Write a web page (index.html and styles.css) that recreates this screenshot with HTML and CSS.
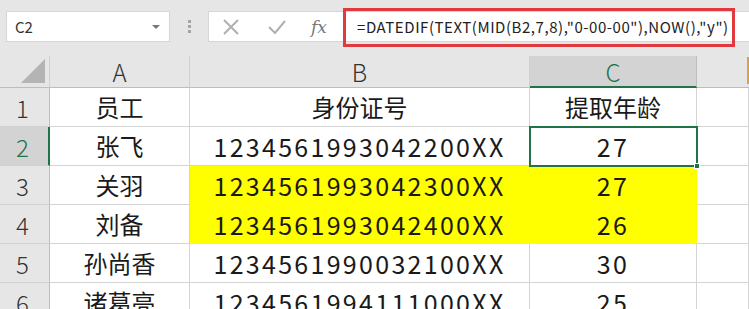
FILE: index.html
```html
<!DOCTYPE html>
<html>
<head lang="zh">
    <meta charset="UTF-8">
    <title>提取年龄</title>
    <link rel="stylesheet" href="styles.css">
</head>
<body>
<div class="toolbar">
    <div class="namebox">
        <span class="name">C2</span>
        <span class="arrow"></span>
    </div>
    <div class="dots"><i></i><i></i><i></i></div>
    <div class="fbar">
        <div class="fbtns">
            <svg class="ico" width="18" height="18" viewBox="0 0 18 18"><path d="M2 2 L16 16 M16 2 L2 16" stroke="#b0b0b0" stroke-width="2" fill="none"/></svg>
            <svg class="ico" width="18" height="18" viewBox="0 0 18 18"><path d="M1 9 L7 15 L17 3" stroke="#b0b0b0" stroke-width="2" fill="none"/></svg>
            <span class="fx">fx</span>
        </div>
        <div class="formula">=DATEDIF(TEXT(MID(B2,7,8),"0-00-00"),NOW(),"y")</div>
        <div class="mark"></div>
    </div>
</div>
<div class="sheet">
    <div class="hd corner"><span class="tri"></span></div>
    <div class="hd">A</div>
    <div class="hd">B</div>
    <div class="hd sel">C</div>
    <div class="hd dcol"><span class="dbar"></span></div>

    <div class="rh">1</div>
    <div class="c">员工</div>
    <div class="c">身份证号</div>
    <div class="c">提取年龄</div>
    <div class="c"></div>

    <div class="rh sel">2</div>
    <div class="c">张飞</div>
    <div class="c num">1234561993042200XX</div>
    <div class="c num active">27<span class="handle"></span></div>
    <div class="c"></div>

    <div class="rh">3</div>
    <div class="c">关羽</div>
    <div class="c num yel">1234561993042300XX</div>
    <div class="c num yel">27</div>
    <div class="c"></div>

    <div class="rh">4</div>
    <div class="c">刘备</div>
    <div class="c num yel">1234561993042400XX</div>
    <div class="c num yel">26</div>
    <div class="c"></div>

    <div class="rh">5</div>
    <div class="c">孙尚香</div>
    <div class="c num">1234561990032100XX</div>
    <div class="c num">30</div>
    <div class="c"></div>

    <div class="rh">6</div>
    <div class="c">诸葛亮</div>
    <div class="c num">1234561994111000XX</div>
    <div class="c num">25</div>
    <div class="c"></div>
</div>
</body>
</html>
```

FILE: styles.css
```css
* {
    margin: 0;
    padding: 0;
    box-sizing: border-box;
}
body {
    width: 749px;
    height: 309px;
    overflow: hidden;
    background: #e6e6e6;
    font-family: "Noto Sans CJK SC", "Noto Sans", sans-serif;
    color: #1a1a1a;
}

/* 上方编辑栏 */
.toolbar {
    height: 56px;
    display: flex;
    align-items: flex-start;
    padding-top: 11px;
    padding-left: 6px;
}
.namebox {
    width: 164px;
    height: 31px;
    background: #fff;
    border: 1px solid #d6d6d6;
    display: flex;
    align-items: center;
    justify-content: space-between;
    padding: 0 9px 0 8px;
}
.name {
    font-size: 15px;
    color: #333;
}
.arrow {
    width: 0;
    height: 0;
    border-left: 4px solid transparent;
    border-right: 4px solid transparent;
    border-top: 4px solid #777;
}
.dots {
    width: 38px;
    height: 31px;
    display: flex;
    flex-direction: column;
    align-items: center;
    justify-content: center;
    gap: 2px;
}
.dots i {
    width: 3px;
    height: 3px;
    background: #a5a5a5;
}
.fbar {
    position: relative;
    flex: 1;
    height: 31px;
    display: flex;
    background: #fff;
    border: 1px solid #d6d6d6;
    border-right: none;
}
.fbtns {
    width: 135px;
    display: flex;
    align-items: center;
    gap: 28px;
    padding-left: 13px;
    border-right: 1px solid #d6d6d6;
}
.fx {
    font-family: "DejaVu Serif", serif;
    font-style: italic;
    font-size: 17px;
    color: #777;
    margin-left: -3px;
}
.formula {
    flex: 1;
    padding-left: 13px;
    font-size: 15px;
    line-height: 29px;
    letter-spacing: 0.55px;
    color: #222;
    white-space: nowrap;
}
.mark {
    position: absolute;
    left: 134px;
    top: -4px;
    width: 392px;
    height: 39px;
    border: 3px solid #e03a3e;
}

/* 表格区域 */
.sheet {
    display: grid;
    grid-template-columns: 50px 140px 340px 167px 52px;
    grid-template-rows: 32px repeat(6, 39px);
    background: #fff;
}
.hd {
    background: #e6e6e6;
    border-right: 1px solid #d0d0d0;
    border-bottom: 1px solid #bdbdbd;
    font-size: 24px;
    line-height: 31px;
    text-align: center;
    color: #333;
    font-weight: 300;
}
.hd.sel {
    background: #d3d3d3;
    color: #217346;
    border-bottom: 2px solid #217346;
    border-right-color: #bdbdbd;
}
.corner {
    position: relative;
}
.tri {
    position: absolute;
    right: 4px;
    bottom: 4px;
    width: 0;
    height: 0;
    border-left: 24px solid transparent;
    border-bottom: 24px solid #b4b4b4;
}
.dcol {
    border-right: none;
    position: relative;
}
.dbar {
    position: absolute;
    right: 0;
    top: 1px;
    width: 2px;
    height: 27px;
    background: #d9a04a;
}
.rh {
    background: #e6e6e6;
    border-right: 1px solid #bdbdbd;
    border-bottom: 1px solid #d0d0d0;
    font-size: 24px;
    line-height: 40px;
    padding-left: 16px;
    color: #333;
    font-weight: 300;
}
.rh.sel {
    background: #d3d3d3;
    color: #217346;
    border-right: 2px solid #217346;
}
.c {
    border-right: 1px solid #d4d4d4;
    border-bottom: 1px solid #d4d4d4;
    font-size: 24px;
    line-height: 38px;
    text-align: center;
    white-space: nowrap;
    overflow: hidden;
}
.num {
    font-size: 25px;
    letter-spacing: 2.3px;
}
.yel {
    background: #ffff00;
    border-color: #ffff00;
}
.active {
    position: relative;
    overflow: visible;
    outline: 2px solid #217346;
    outline-offset: -1px;
}
.handle {
    position: absolute;
    right: -4px;
    bottom: -4px;
    width: 6px;
    height: 6px;
    background: #217346;
    border: 1px solid #fff;
}
```
